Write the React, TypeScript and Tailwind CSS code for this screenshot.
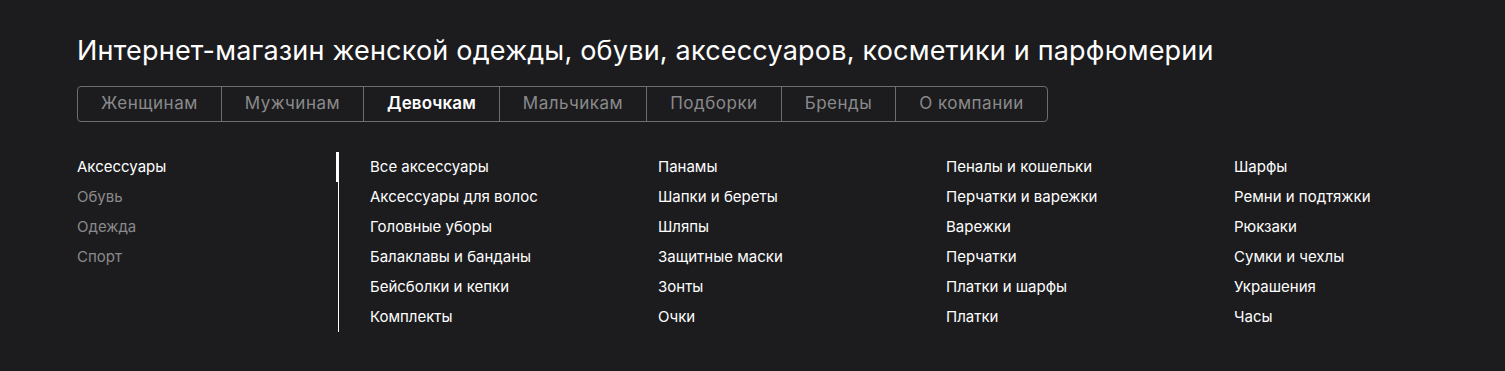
const tabs = ["Женщинам", "Мужчинам", "Девочкам", "Мальчикам", "Подборки", "Бренды", "О компании"];
const side = ["Аксессуары", "Обувь", "Одежда", "Спорт"];
const columns = [
  ["Все аксессуары", "Аксессуары для волос", "Головные уборы", "Балаклавы и банданы", "Бейсболки и кепки", "Комплекты"],
  ["Панамы", "Шапки и береты", "Шляпы", "Защитные маски", "Зонты", "Очки"],
  ["Пеналы и кошельки", "Перчатки и варежки", "Варежки", "Перчатки", "Платки и шарфы", "Платки"],
  ["Шарфы", "Ремни и подтяжки", "Рюкзаки", "Сумки и чехлы", "Украшения", "Часы"],
];

export default function App() {
  return (
    <div className="min-h-[371px] w-full overflow-hidden bg-[#1c1c1e] pl-[77px] pt-[34px] font-['Inter','Liberation_Sans',sans-serif] text-white">
      <h1 className="text-[27px] leading-[34px] font-normal tracking-[0.2px]">
        Интернет-магазин женской одежды, обуви, аксессуаров, косметики и парфюмерии
      </h1>

      <div className="mt-[18px] inline-flex h-[36px] rounded-[4px] border border-[#6e6e70]">
        {tabs.map((t, i) => (
          <div
            key={t}
            className={`flex items-center px-[23px] text-[17px] ${i > 0 ? "border-l border-[#6e6e70]" : ""} ${
              t === "Девочкам" ? "font-semibold tracking-[0.1px] text-white" : "tracking-[0.5px] text-[#8a8a8c]"
            }`}
          >
            {t}
          </div>
        ))}
      </div>

      <div className="mt-[30px] flex">
        <ul className="w-[261px] shrink-0 text-[15px]">
          {side.map((s, i) => (
            <li key={s} className={`h-[30px] leading-[30px] ${i === 0 ? "text-white" : "text-[#8a8a8c]"}`}>
              {s}
            </li>
          ))}
        </ul>
        <div className="relative w-px shrink-0 bg-white">
          <div className="absolute left-[-2px] top-0 h-[30px] w-[3px] bg-white" />
        </div>
        <div className="flex shrink-0 pl-[31px]">
          {columns.map((col, ci) => (
            <ul key={ci} className="w-[288px] shrink-0 text-[15px]">
              {col.map((c) => (
                <li key={c} className="h-[30px] leading-[30px]">
                  {c}
                </li>
              ))}
            </ul>
          ))}
        </div>
      </div>
    </div>
  );
}
